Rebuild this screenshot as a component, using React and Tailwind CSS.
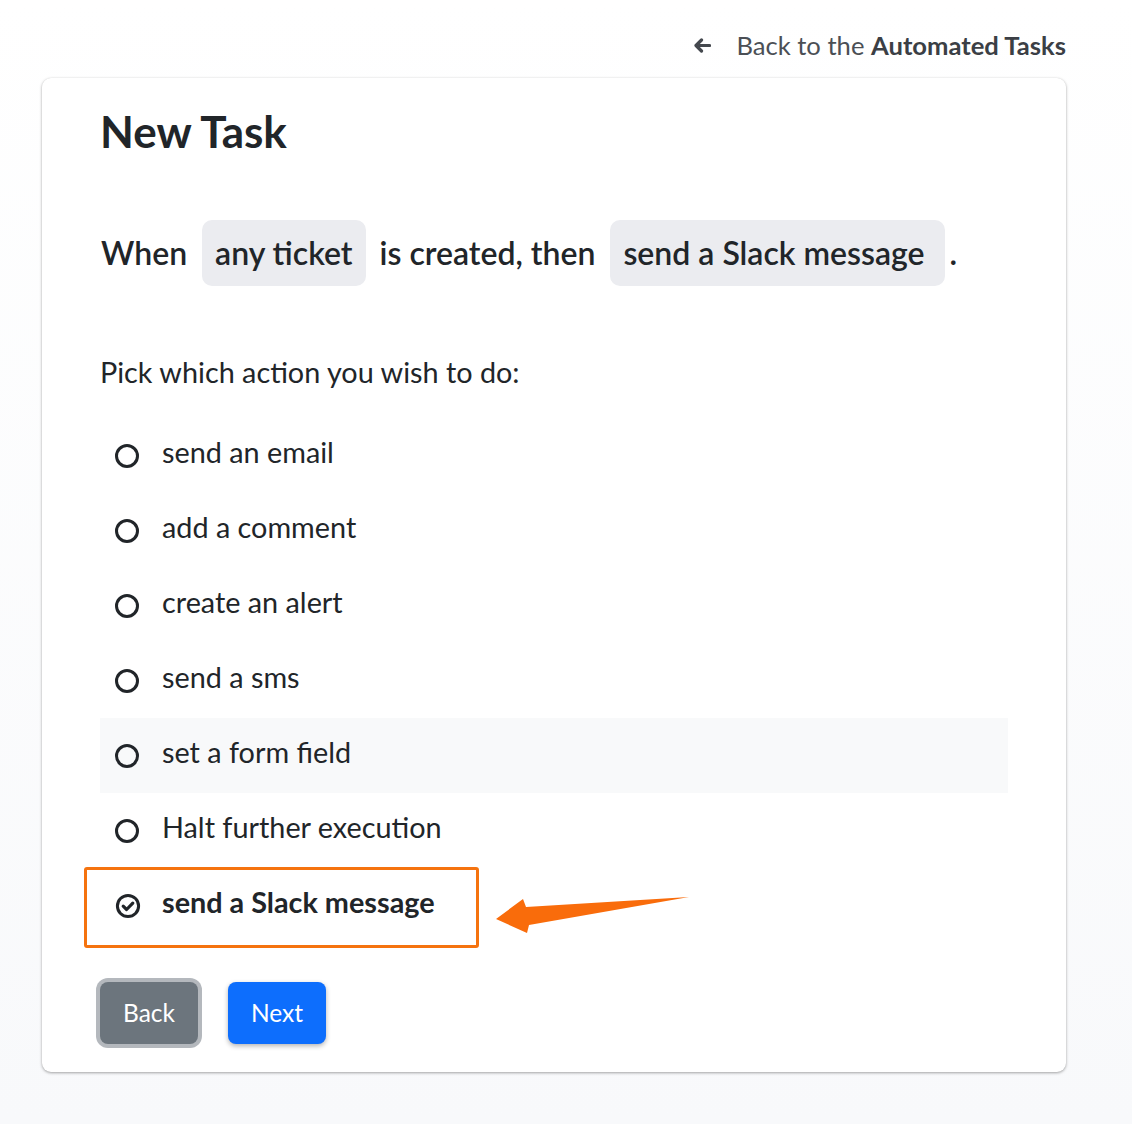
import React from "react";

const options = [
  "send an email",
  "add a comment",
  "create an alert",
  "send a sms",
  "set a form field",
  "Halt further execution",
  "send a Slack message",
];

function Radio({ checked }) {
  if (checked) {
    return (
      <svg width="26" height="26" viewBox="0 0 26 26" className="shrink-0">
        <circle cx="13" cy="13" r="10.6" fill="none" stroke="#212529" strokeWidth="3" />
        <path d="M8.2 13.2 L11.6 16.5 L17.8 10.1" fill="none" stroke="#212529" strokeWidth="3.2" strokeLinecap="round" strokeLinejoin="round" />
      </svg>
    );
  }
  return <span className="block w-[24px] h-[24px] shrink-0 rounded-full border-[3px] border-[#212529]" />;
}

export default function App() {
  return (
    <div
      className="min-h-[1124px] w-full bg-gradient-to-b from-white to-[#f8f9fb] text-[#212529]"
      style={{ fontFamily: "Lato, 'Noto Sans', sans-serif" }}
    >
      <div className="ml-[42px] w-[1024px] pt-[29px]">
        <div className="flex justify-end items-center h-[32px] text-[25.6px] leading-[32px] text-[#4b4f55]">
          <svg width="17" height="15" viewBox="0 0 17 15" className="mr-[25px]">
            <path d="M7.5 2 L2 7.5 L7.5 13 M2.5 7.5 H15.5" fill="none" stroke="#44484e" strokeWidth="3.2" strokeLinecap="round" strokeLinejoin="round" />
          </svg>
          <span>
            Back to the <span className="font-bold text-[#3b3f45]">Automated Tasks</span>
          </span>
        </div>

        <div className="relative mt-[17px] bg-white rounded-[9px] shadow-[0_1px_3px_rgba(0,0,0,0.35),0_0_1px_rgba(0,0,0,0.08)] px-[58px] pt-[27px] pb-[28px]">
          <h1 className="text-[44px] leading-[52px] font-bold">New Task</h1>

          <div className="mt-[63px] flex items-center text-[32px] font-semibold">
            <span className="ml-[1px]">When</span>
            <span className="ml-[15px] h-[66px] flex items-center px-[13px] rounded-[10px] bg-[#ebecf0]">any ticket</span>
            <span className="ml-[14px]">is created, then</span>
            <span className="ml-[15px] h-[66px] flex items-center pl-[13px] pr-[20px] rounded-[10px] bg-[#ebecf0]">send a Slack message</span>
            <span className="ml-[5px]">.</span>
          </div>

          <p className="mt-[68px] text-[28.8px] leading-[36px]">Pick which action you wish to do:</p>

          <div className="mt-[28px] flex flex-col">
            {options.map((o, i) => {
              const selected = i === 6;
              const hover = i === 4;
              return (
                <div
                  key={o}
                  className={
                    "relative h-[75px] flex items-center pl-[15px] gap-[23px] text-[28.8px] " +
                    (hover ? "bg-[#f8f9fa]" : "") +
                    (selected ? " font-bold" : "")
                  }
                >
                  <Radio checked={selected} />
                  <span className={"pb-[6px] " + (selected ? "-ml-[2px]" : "")}>{o}</span>
                  {selected && (
                    <span className="absolute left-[-16px] top-[-1px] w-[395px] h-[81px] border-[3px] border-[#f5730f] rounded-[3px] pointer-events-none" />
                  )}
                </div>
              );
            })}
          </div>

          <div className="mt-[39px] flex items-center gap-[30px]">
            <button className="h-[62px] px-[23px] rounded-[8px] bg-[#6c757d] text-white text-[24.5px] ring-4 ring-[#b4b8bd]">
              Back
            </button>
            <button className="h-[62px] px-[23px] rounded-[8px] bg-[#0d6efd] text-white text-[24.5px] shadow-[0_2px_5px_rgba(0,0,0,0.3)]">
              Next
            </button>
          </div>

          <svg
            className="absolute left-[453px] top-[817px]"
            width="196"
            height="40"
            viewBox="0 0 196 40"
          >
            <path d="M1 24 L28 4 L31 12 L194 2 L34 30 L32 38 Z" fill="#f96c0b" />
          </svg>
        </div>
      </div>
    </div>
  );
}
